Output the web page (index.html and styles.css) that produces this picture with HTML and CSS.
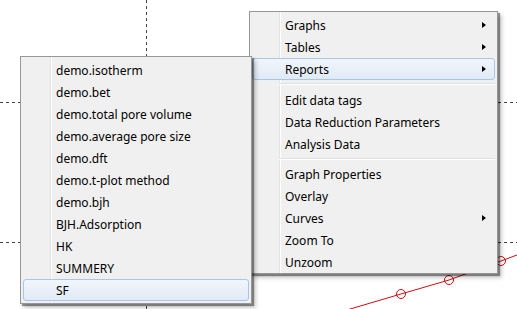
FILE: index.html
```html
<!DOCTYPE html>
<html lang="en">
<head>
    <meta charset="UTF-8">
    <title>Graph Context Menu</title>
    <link rel="stylesheet" href="styles.css">
</head>
<body>
    <div class="canvas">
        <svg class="plot" width="517" height="309" viewBox="0 0 517 309">
            <g class="grid">
                <line x1="146.5" y1="0" x2="146.5" y2="309"/>
                <line x1="0" y1="102.5" x2="517" y2="102.5"/>
                <line x1="0" y1="242.5" x2="517" y2="242.5"/>
            </g>
            <g class="series">
                <polyline points="340,312 401,294 449,280 501,261 517,255"/>
                <circle cx="401" cy="294" r="4.5"/>
                <circle cx="449" cy="280" r="4.5"/>
                <circle cx="501" cy="261" r="4.5"/>
            </g>
        </svg>

        <div class="menu main-menu">
            <div class="item">Graphs<span class="arrow"></span></div>
            <div class="item">Tables<span class="arrow"></span></div>
            <div class="item active">Reports<span class="arrow"></span></div>
            <div class="sep"></div>
            <div class="item">Edit data tags</div>
            <div class="item">Data Reduction Parameters</div>
            <div class="item">Analysis Data</div>
            <div class="sep narrow"></div>
            <div class="item">Graph Properties</div>
            <div class="item">Overlay</div>
            <div class="item">Curves<span class="arrow"></span></div>
            <div class="item">Zoom To</div>
            <div class="item">Unzoom</div>
        </div>

        <div class="menu sub-menu">
            <div class="item">demo.isotherm</div>
            <div class="item">demo.bet</div>
            <div class="item">demo.total pore volume</div>
            <div class="item">demo.average pore size</div>
            <div class="item">demo.dft</div>
            <div class="item">demo.t-plot method</div>
            <div class="item">demo.bjh</div>
            <div class="item">BJH.Adsorption</div>
            <div class="item">HK</div>
            <div class="item">SUMMERY</div>
            <div class="item active">SF</div>
        </div>
    </div>
</body>
</html>
```

FILE: styles.css
```css
body {
    margin: 0;
    background: #fff;
    font-family: 'Noto Sans', 'Segoe UI', sans-serif;
    font-size: 12px;
    color: #000;
}

.canvas {
    position: relative;
    width: 517px;
    height: 309px;
    overflow: hidden;
}

.plot {
    display: block;
}

.grid line {
    stroke: #444;
    stroke-width: 1;
    stroke-dasharray: 3 3;
}

.series polyline,
.series circle {
    fill: none;
    stroke: #cc1010;
    stroke-width: 1;
}

.menu {
    position: absolute;
    box-sizing: border-box;
    padding: 2px;
    border: 1px solid #979797;
    background-color: #f0f0f0;
    background-image: linear-gradient(to right,
        transparent 29px, #e2e3e3 29px, #e2e3e3 30px,
        #fff 30px, #fff 31px, transparent 31px);
    box-shadow: 2px 2px 1px rgba(0, 0, 0, 0.4), 4px 4px 4px rgba(0, 0, 0, 0.2);
}

.main-menu {
    left: 249px;
    top: 11px;
    width: 249px;
    padding-bottom: 0;
}

.sub-menu {
    left: 20px;
    top: 56px;
    width: 232px;
}

.item {
    display: flex;
    align-items: center;
    height: 22px;
    box-sizing: border-box;
    padding: 0 8px 0 32px;
    border: 1px solid transparent;
    border-radius: 3px;
    white-space: nowrap;
}

.item.active {
    border-color: #a8c6ea;
    background: linear-gradient(#f1f6fc, #e0eaf6);
}

.arrow {
    margin-left: auto;
    width: 0;
    height: 0;
    border-left: 4px solid #000;
    border-top: 3.5px solid transparent;
    border-bottom: 3.5px solid transparent;
}

.sep {
    height: 1px;
    margin: 3px 0 4px 27px;
    background: #e0e0e0;
    border-bottom: 1px solid #fff;
}

.sep.narrow {
    margin-bottom: 3px;
}
```
